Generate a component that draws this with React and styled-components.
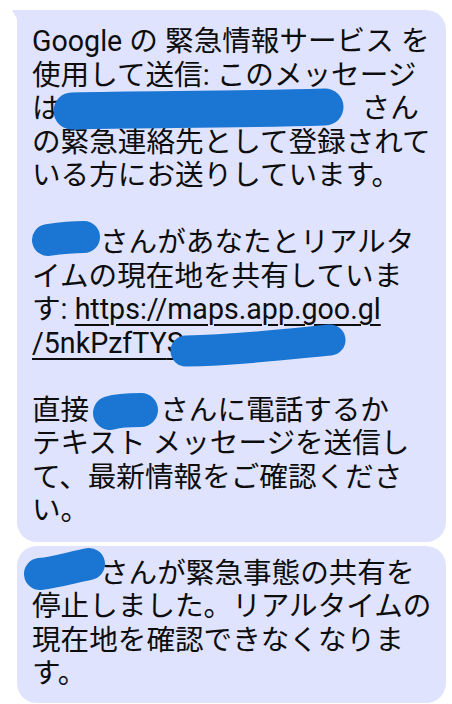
import styled, { createGlobalStyle } from "styled-components";

const GlobalStyle = createGlobalStyle`
  html, body {
    margin: 0;
    padding: 0;
    background: #ffffff;
  }
  body {
    font-family: Roboto, "Noto Sans CJK JP", sans-serif;
  }
`;

const Thread = styled.div`
  display: flex;
  flex-direction: column;
  gap: 4px;
  padding: 10px 6px 0 17px;
  width: 452px;
  height: 704px;
  box-sizing: border-box;
  overflow: hidden;
`;

const Bubble = styled.div`
  position: relative;
  background: #dfe3fd;
  border-radius: ${(p) => (p.$tail ? "0 20px 20px 20px" : "20px")};
  padding: ${(p) => (p.$tail ? "15px 8px 14px 15px" : "11px 8px 12px 15px")};
  color: #0d0d0d;
  font-size: 28.6px;
  line-height: 33.5px;
  &::before {
    content: "";
    display: ${(p) => (p.$tail ? "block" : "none")};
    position: absolute;
    top: 0;
    left: -5px;
    width: 0;
    height: 0;
    border-top: 9px solid #dfe3fd;
    border-left: 5px solid transparent;
  }
`;

const Paragraph = styled.div`
  & + & {
    margin-top: 33.5px;
  }
`;

const Line = styled.div`
  white-space: nowrap;
`;

const Link = styled.span`
  text-decoration: underline;
  text-decoration-thickness: 2px;
  text-underline-offset: 5px;
`;

const Redact = styled.span`
  position: relative;
  display: inline-block;
  width: ${(p) => p.$w}px;
  height: 33px;
  vertical-align: top;
`;

const Blot = styled.svg`
  position: absolute;
  left: ${(p) => p.$x}px;
  top: ${(p) => p.$y}px;
  overflow: visible;
`;

const Scribble = ({ w, x, y, bw, bh, d, sw }) => (
  <Redact $w={w}>
    <Blot $x={x} $y={y} width={bw} height={bh} viewBox={`0 0 ${bw} ${bh}`}>
      <path
        d={d}
        fill="none"
        stroke="#1a76d2"
        strokeWidth={sw}
        strokeLinecap="round"
        strokeLinejoin="round"
      />
    </Blot>
  </Redact>
);

export default function App() {
  return (
    <>
      <GlobalStyle />
      <Thread>
        <Bubble $tail>
          <Paragraph>
            <Line>Google の 緊急情報サービス を</Line>
            <Line>使用して送信: このメッセージ</Line>
            <Line>
              は
              <Scribble
                w={301}
                x={-8}
                y={-3}
                bw={290}
                bh={40}
                sw={37}
                d="M19,22 C90,20 180,21 272,18"
              />
              さん
            </Line>
            <Line>の緊急連絡先として登録されて</Line>
            <Line>いる方にお送りしています。</Line>
          </Paragraph>
          <Paragraph>
            <Line>
              <Scribble
                w={68}
                x={0}
                y={-4}
                bw={68}
                bh={33}
                sw={32}
                d="M16,18 C30,16 40,15 52,15"
              />
              さんがあなたとリアルタ
            </Line>
            <Line>イムの現在地を共有していま</Line>
            <Line>
              す: <Link>https://maps.app.goo.gl</Link>
            </Line>
            <Line>
              <Link>
                /5nkPzfTY
                <Scribble
                  w={0}
                  x={3}
                  y={-4}
                  bw={176}
                  bh={44}
                  sw={31}
                  d="M16,28 C70,27 120,21 160,17"
                />
                S
              </Link>
            </Line>
          </Paragraph>
          <Paragraph>
            <Line>
              直接
              <Scribble
                w={71}
                x={3}
                y={-1}
                bw={66}
                bh={37}
                sw={34}
                d="M18,20 C28,17 40,17 49,17"
              />
              さんに電話するか
            </Line>
            <Line>テキスト メッセージを送信し</Line>
            <Line>て、最新情報をご確認くださ</Line>
            <Line>い。</Line>
          </Paragraph>
        </Bubble>
        <Bubble>
          <Paragraph>
            <Line>
              <Scribble
                w={68}
                x={-9}
                y={-9}
                bw={82}
                bh={42}
                sw={32}
                d="M17,26 C35,24 50,19 66,16"
              />
              さんが緊急事態の共有を
            </Line>
            <Line>停止しました。リアルタイムの</Line>
            <Line>現在地を確認できなくなりま</Line>
            <Line>す。</Line>
          </Paragraph>
        </Bubble>
      </Thread>
    </>
  );
}
